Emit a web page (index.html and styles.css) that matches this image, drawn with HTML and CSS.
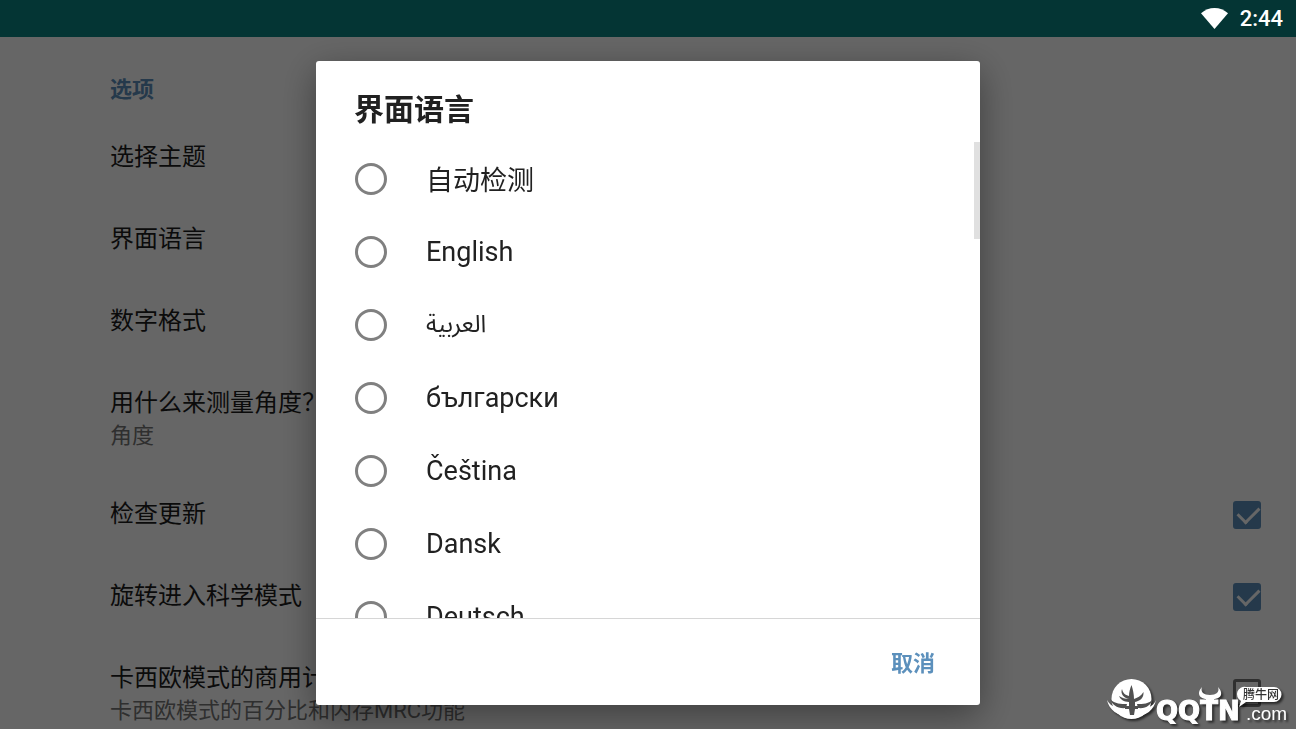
FILE: index.html
```html
<!DOCTYPE html>
<html lang="zh-CN">
<head>
    <meta charset="UTF-8">
    <meta name="viewport" content="width=device-width, initial-scale=1.0">
    <title>选项</title>
    <link rel="stylesheet" href="styles.css">
</head>
<body>
    <header class="status-bar">
        <svg class="wifi" viewBox="0 0 27 21" aria-hidden="true">
            <path d="M0 5.2C4 1.8 8.5 0 13.5 0S23 1.8 27 5.2L13.5 21Z" fill="#fff"/>
        </svg>
        <time>2:44</time>
    </header>

    <main class="settings">
        <h2 class="category">选项</h2>
        <div class="setting"><div class="setting-title">选择主题</div></div>
        <div class="setting"><div class="setting-title">界面语言</div></div>
        <div class="setting"><div class="setting-title">数字格式</div></div>
        <div class="setting">
            <div>
                <div class="setting-title">用什么来测量角度？</div>
                <div class="summary">角度</div>
            </div>
        </div>
        <div class="setting">
            <label class="setting-title" for="updates">检查更新</label>
            <input class="checkbox" type="checkbox" id="updates" checked>
        </div>
        <div class="setting">
            <label class="setting-title" for="rotate">旋转进入科学模式</label>
            <input class="checkbox" type="checkbox" id="rotate" checked>
        </div>
        <div class="setting">
            <label for="casio">
                <span class="setting-title">卡西欧模式的商用计算</span>
                <span class="summary">卡西欧模式的百分比和内存MRC功能</span>
            </label>
            <input class="checkbox" type="checkbox" id="casio">
        </div>
    </main>

    <div class="scrim">
        <form class="dialog" role="dialog" aria-labelledby="dialogTitle">
            <h1 class="dialog-title" id="dialogTitle">界面语言</h1>
            <div class="languages">
                <label class="language"><input type="radio" name="language">自动检测</label>
                <label class="language"><input type="radio" name="language">English</label>
                <label class="language"><input type="radio" name="language"><span class="arabic" lang="ar">العربية</span></label>
                <label class="language"><input type="radio" name="language">български</label>
                <label class="language"><input type="radio" name="language">Čeština</label>
                <label class="language"><input type="radio" name="language">Dansk</label>
                <label class="language"><input type="radio" name="language">Deutsch</label>
                <div class="scroll-thumb"></div>
            </div>
            <div class="actions">
                <button type="button">取消</button>
            </div>
        </form>
    </div>

    <svg class="watermark" viewBox="0 0 190 56" role="img" aria-label="QQTN.com 腾牛网">
        <!-- bull emblem -->
        <circle cx="27.5" cy="26" r="20" fill="#fff"/>
        <g fill="#505050">
            <path d="M27.5 12C29 17 30 21 30 26C33 25 37 23 39.5 19C40 25 36 28 31 29V33H34V36H31L30 42H26L25 36H21V33H25V29C20 29 16 26 15 23C18 25 21 26 25 26C20 25 16 21 18 16C19 20 21 22 25 23C25 19 26 16 27.5 12Z"/>
            <path d="M6 26C11 31 17 31 23 31L22 35C14 36 8 32 6 26ZM49 26C45 31 39 31 33 31L34 35C42 36 47 32 49 26Z"/>
        </g>
        <path d="M3 27C7 34 14 36 22 37L25 44C14 43 5 37 3 27ZM52 27C49 34 42 36 34 37L31 44C42 43 50 37 52 27Z" fill="#fff"/>
        <g fill="#fff">
            <text class="brand" x="52" y="47">QQTN</text>
            <!-- horns over the T -->
            <path d="M98 14C91 22 98 26 102 26V30H110V26C115 26 121 22 114 14C116 19 112 22 106 22S96 19 98 14Z"/>
            <text class="domain" x="142" y="47">.com</text>
            <path d="M142 14H170A7.5 7.5 0 0 1 170 29H142L135 34L137 28A7.5 7.5 0 0 1 142 14Z"/>
        </g>
        <text class="badge" x="139" y="26">腾牛网</text>
    </svg>
</body>
</html>
```

FILE: styles.css
```css
* {
    box-sizing: border-box;
}
body {
    margin: 0;
    height: 100vh;
    overflow: hidden;
    background: #fff;
    color: #212121;
    font-family: Roboto, "Noto Sans CJK SC", sans-serif;
}
.status-bar {
    position: relative;
    z-index: 2;
    display: flex;
    align-items: center;
    justify-content: flex-end;
    gap: 12px;
    height: 37px;
    padding: 0 13px;
    background: #043534;
    color: #fff;
    font-size: 22px;
    font-weight: 500;
}
.wifi {
    width: 27px;
    height: 21px;
}

/* settings list */
.settings {
    padding: 0 35px 0 110px;
}
.category {
    margin: 0;
    padding: 37px 0 10px;
    color: #5c90bc;
    font-size: 22px;
    font-weight: 700;
    line-height: 32px;
}
.setting {
    display: flex;
    align-items: center;
    justify-content: space-between;
    padding: 24px 0 23px;
}
.setting-title {
    display: block;
    color: #1c1c1c;
    font-size: 24px;
    line-height: 35px;
}
.summary {
    display: block;
    color: #757575;
    font-size: 22px;
    line-height: 29px;
}
.checkbox {
    appearance: none;
    position: relative;
    width: 28px;
    height: 28px;
    margin: 0;
    border: 3px solid #757575;
    border-radius: 3px;
}
.checkbox:checked {
    border-color: #5c90bc;
    background: #5c90bc;
}
.checkbox:checked::after {
    content: "";
    position: absolute;
    left: 6px;
    top: -2px;
    width: 10px;
    height: 18px;
    border: solid #fff;
    border-width: 0 3px 3px 0;
    transform: rotate(45deg);
}

/* language dialog */
.scrim {
    position: fixed;
    inset: 0;
    z-index: 1;
    display: flex;
    justify-content: center;
    padding: 61px 24px 24px;
    background: rgba(0, 0, 0, 0.6);
}
.dialog {
    display: flex;
    flex-direction: column;
    width: 100%;
    max-width: 664px;
    border-radius: 3px;
    background: #fff;
    box-shadow: 0 10px 36px rgba(0, 0, 0, 0.4);
}
.dialog-title {
    margin: 0;
    padding: 27px 38px 10px;
    font-size: 30px;
    font-weight: 700;
    line-height: 44px;
}
.languages {
    position: relative;
    flex: 1;
    min-height: 0;
    overflow: hidden;
}
.language {
    display: flex;
    align-items: center;
    gap: 39px;
    height: 73px;
    padding: 0 39px;
    font-size: 27px;
}
.language input {
    appearance: none;
    width: 32px;
    height: 32px;
    margin: 0;
    border: 3px solid #808080;
    border-radius: 50%;
}
.arabic {
    font-family: "Noto Sans Arabic", "DejaVu Sans", sans-serif;
    font-size: 24px;
}
.scroll-thumb {
    position: absolute;
    top: 0;
    right: 0;
    width: 6px;
    height: 97px;
    background: #e0e0e0;
}
.actions {
    display: flex;
    align-items: center;
    justify-content: flex-end;
    height: 87px;
    padding: 0 31px;
    border-top: 1px solid #d6d6d6;
}
.actions button {
    padding: 8px 14px 10px;
    border: 0;
    background: none;
    color: #5c90bc;
    font: inherit;
    font-size: 22px;
    font-weight: 700;
}

.watermark {
    position: fixed;
    right: 2px;
    bottom: 0;
    z-index: 3;
    width: 190px;
    height: 56px;
    filter: drop-shadow(2px 2px 1px rgba(0, 0, 0, 0.6));
}
.brand {
    font: bold 26px "DejaVu Sans", sans-serif;
    stroke: #fff;
    stroke-width: 1px;
}
.domain {
    font: 19px "Liberation Sans", sans-serif;
}
.badge {
    fill: #333;
    font: 500 12px "Noto Sans CJK SC", sans-serif;
}
```
